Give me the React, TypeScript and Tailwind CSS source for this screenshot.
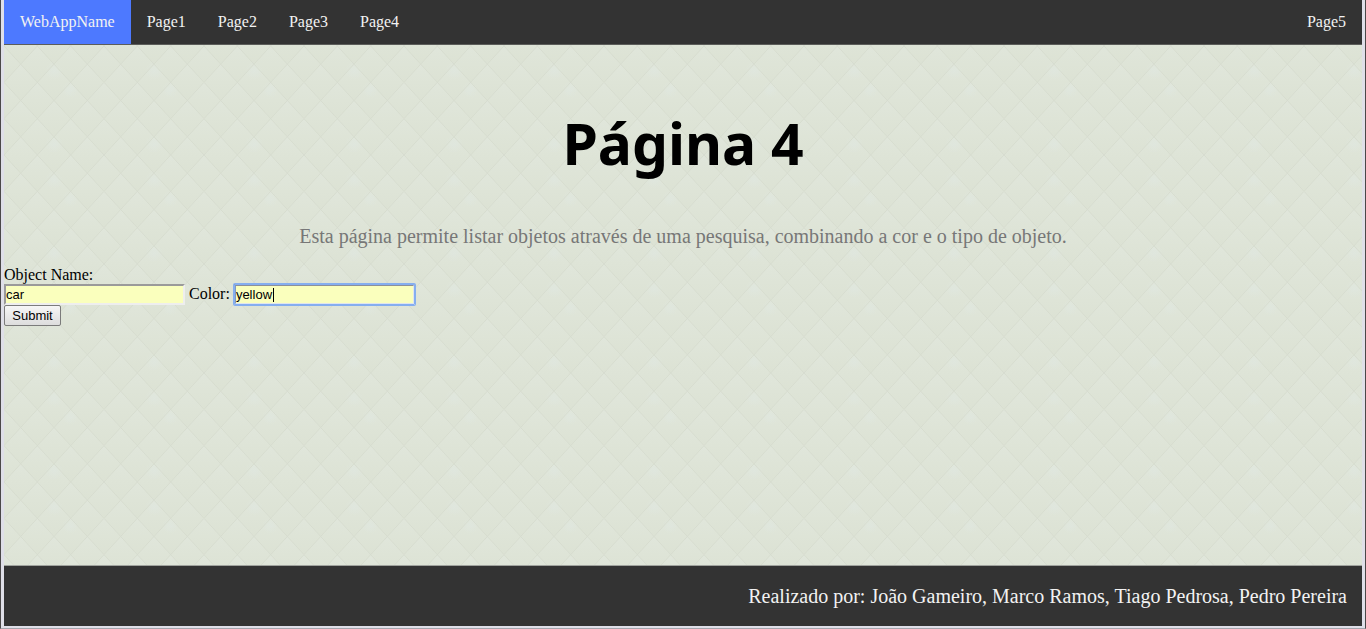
import React from "react";

const links = ["Page1", "Page2", "Page3", "Page4"];

const tops = [
  [33.33, 0], [66.67, 0], [100, 0], [0, 0],
  [16.67, 18.17], [50, 18.17], [83.33, 18.17],
  [0, 36.33], [33.33, 36.33], [66.67, 36.33], [100, 36.33],
  [16.67, 54.5], [50, 54.5], [83.33, 54.5],
  [0, 72.67], [33.33, 72.67], [66.67, 72.67], [100, 72.67],
  [16.67, 90.83], [50, 90.83], [83.33, 90.83],
  [16.67, -18.17], [50, -18.17], [83.33, -18.17],
];

function QuiltBackground() {
  return (
    <svg className="absolute inset-0 -z-10 h-full w-full" aria-hidden="true">
      <defs>
        <linearGradient id="facet" x1="0" y1="0" x2="0" y2="1">
          <stop offset="0" stopColor="#e0e6db" />
          <stop offset="0.5" stopColor="#dee4d7" />
          <stop offset="1" stopColor="#dce2d4" />
        </linearGradient>
        <radialGradient id="glow">
          <stop offset="0" stopColor="#e0e8e2" stopOpacity="0.5" />
          <stop offset="1" stopColor="#e0e8e2" stopOpacity="0" />
        </radialGradient>
        <pattern id="quilt" width="100" height="109" patternUnits="userSpaceOnUse" y="1">
          <rect width="100" height="109" fill="#dee4d7" />
          {tops.map(([x, y]) => (
            <path
              key={`${x}-${y}`}
              d={`M${x} ${y}l16.67 18.17l-16.67 18.17l-16.67 -18.17z`}
              fill="url(#facet)"
            />
          ))}
          <circle cx="50" cy="25" r="9" fill="url(#glow)" />
          <circle cx="66" cy="44" r="8" fill="url(#glow)" />
          <circle cx="50" cy="98" r="9" fill="url(#glow)" />
          <path
            d="M0 0L100 109M33.33 0L100 72.67M66.67 0L100 36.33M0 36.33L66.67 109M0 72.67L33.33 109M100 0L0 109M66.67 0L0 72.67M33.33 0L0 36.33M100 36.33L33.33 109M100 72.67L66.67 109"
            stroke="#d6dccf"
            strokeWidth="1"
            strokeOpacity="0.9"
            fill="none"
          />
        </pattern>
      </defs>
      <rect width="100%" height="100%" fill="url(#quilt)" />
    </svg>
  );
}

export default function App() {
  return (
    <div className="flex min-h-screen flex-col border-x border-b border-x-[#4a4848] border-b-[#a5a5ad] font-['Liberation_Serif',serif] text-base text-black">
      <div className="flex grow flex-col border-x-3 border-b-2 border-[#dfdfe8]">
        <nav className="flex h-11 bg-[#333333] leading-11 text-[#f2f2f2]">
          <a href="#home" className="bg-[#4d79ff] px-4">WebAppName</a>
          {links.map((name) => (
            <a key={name} href={`#${name}`} className="px-4">{name}</a>
          ))}
          <a href="#Page5" className="ml-auto px-4">Page5</a>
        </nav>

        <main className="relative isolate grow border-t border-[#5c5d5a]">
          <QuiltBackground />
          <h1 className="pt-14 text-center font-['Noto_Sans',sans-serif] text-[57px] leading-[84px] font-bold">
            Página 4
          </h1>
          <p className="mt-[39px] text-center text-xl leading-6 text-[#777777]">
            Esta página permite listar objetos através de uma pesquisa, combinando a cor e o tipo de objeto.
          </p>
          <form className="mt-[18px]" onSubmit={(e) => e.preventDefault()}>
            <label htmlFor="object" className="block leading-[18px]">Object Name:</label>
            <div className="flex items-start gap-1 leading-5">
              <input
                id="object"
                type="text"
                defaultValue="car"
                className="h-[21px] w-[181px] border-2 border-t-[#9a9a9a] border-r-[#eeeeee] border-b-[#eeeeee] border-l-[#9a9a9a] bg-[#faffbd] font-['Liberation_Sans',sans-serif] text-[13px]"
              />
              <label htmlFor="color">Color:</label>
              <div className="relative">
                <input
                  id="color"
                  type="text"
                  defaultValue="yellow"
                  className="block h-[21px] w-[181px] rounded-[1px] border-2 border-t-[#8c9099] border-r-[#dfe5ee] border-b-[#dfe5ee] border-l-[#8299bd] bg-[#faffbd] font-['Liberation_Sans',sans-serif] text-[13px] caret-transparent ring-1 ring-[#85aef0] outline-1 -outline-offset-1 outline-[#85aef0]"
                />
                <span className="absolute top-1 left-[39px] h-3.5 w-px bg-black" aria-hidden="true" />
              </div>
            </div>
            <button
              type="submit"
              className="block h-[21px] min-w-[57px] rounded-xs border border-[#7b7b7b] bg-linear-to-b from-[#f6f6f6] to-[#dddddd] px-[7px] font-['Liberation_Sans',sans-serif] text-[13px] leading-[18px]"
            >
              Submit
            </button>
          </form>
        </main>

        <footer className="border-t border-[#a0a39e] bg-[#333333] px-[15px] text-right text-xl leading-[60px] text-[#f2f2f2]">
          Realizado por: João Gameiro, Marco Ramos, Tiago Pedrosa, Pedro Pereira
        </footer>
      </div>
    </div>
  );
}
